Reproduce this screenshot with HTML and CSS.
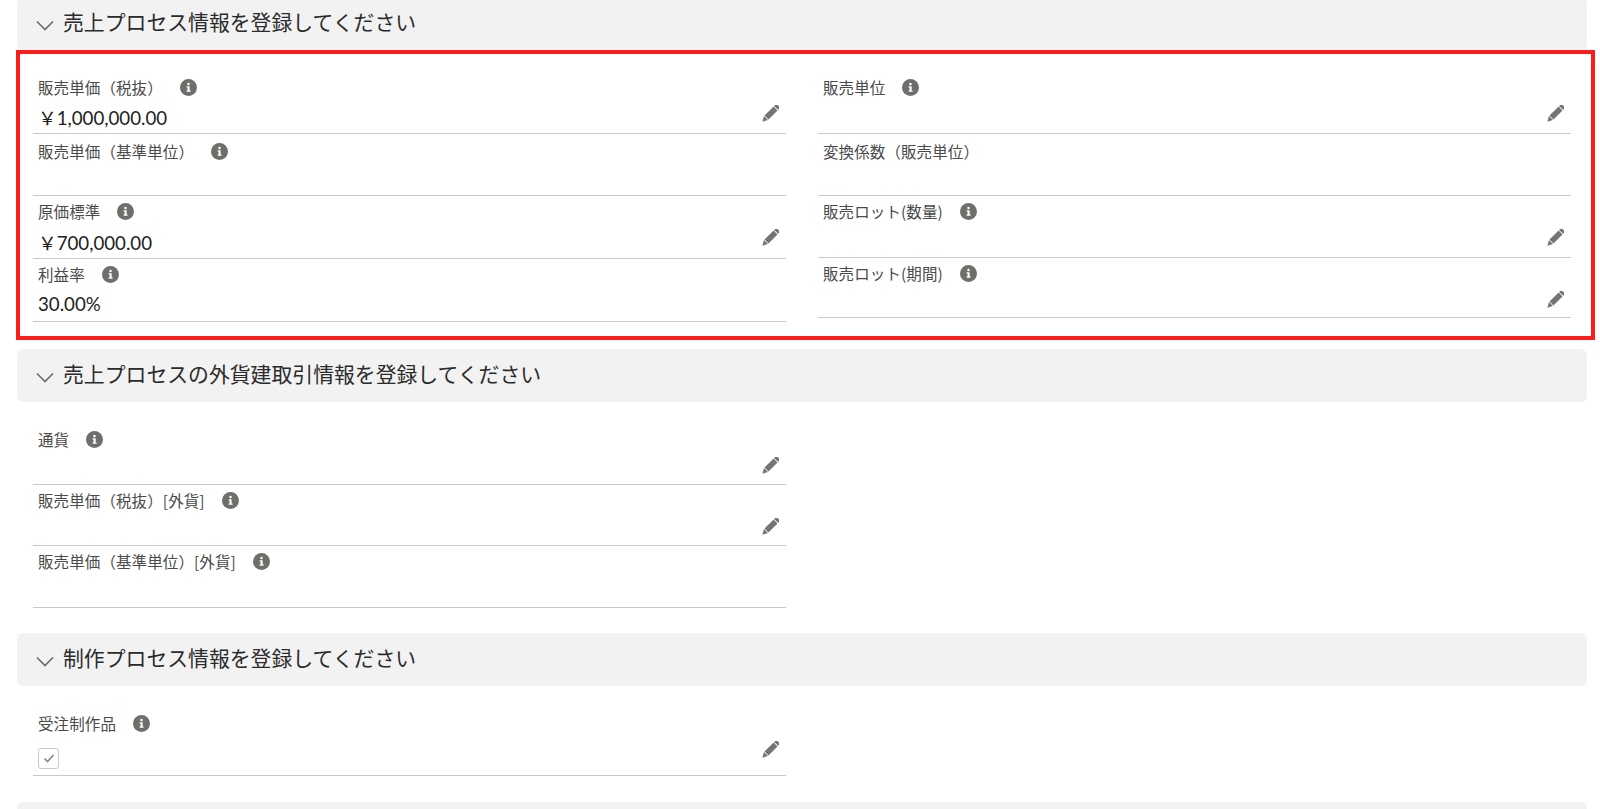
FILE: index.html
```html
<!DOCTYPE html>
<html lang="ja">
<head>
<meta charset="utf-8">
<title>売上プロセス情報</title>
<link rel="stylesheet" href="styles.css">
</head>
<body>
<svg class="defs" width="0" height="0" aria-hidden="true">
  <symbol id="info" viewBox="0 0 18 18">
    <circle cx="9" cy="9" r="9" fill="#706e6b"/>
    <circle cx="9" cy="5.3" r="1.3" fill="#fff"/>
    <path d="M7 7.7h3.2v4.6h1v1.3H7v-1.3h1V9H7z" fill="#fff"/>
  </symbol>
  <symbol id="pencil" viewBox="0 0 20 20">
    <g transform="rotate(45 10 10)" fill="#757472">
      <path d="M6.9 -2.2a.8.8 0 0 1 .8-.8h4.6a.8.8 0 0 1 .8.8V0.4H6.9z"/>
      <rect x="6.9" y="1.3" width="6.2" height="14.2"/>
      <path d="M6.9 16.4h6.2L10 22z"/>
    </g>
  </symbol>
  <symbol id="chev" viewBox="0 0 18 18">
    <path d="M1 5.5L9 13.5l8-8" fill="none" stroke="#706e6b" stroke-width="1.7"/>
  </symbol>
</svg>

<main class="page">
  <section class="section">
    <h2 class="head head-first"><svg class="chev"><use href="#chev"/></svg>売上プロセス情報を登録してください</h2>
    <div class="grid grid-first">
      <div class="col">
        <div class="field"><div class="label">販売単価（税抜）<svg class="info"><use href="#info"/></svg></div><div class="value">￥1,000,000.00</div><svg class="pencil"><use href="#pencil"/></svg></div>
        <div class="field field-low"><div class="label">販売単価（基準単位）<svg class="info"><use href="#info"/></svg></div><div class="value"></div></div>
        <div class="field h63"><div class="label">原価標準<svg class="info"><use href="#info"/></svg></div><div class="value">￥700,000.00</div><svg class="pencil"><use href="#pencil"/></svg></div>
        <div class="field h63"><div class="label">利益率<svg class="info"><use href="#info"/></svg></div><div class="value">30.00%</div></div>
      </div>
      <div class="col">
        <div class="field"><div class="label">販売単位<svg class="info"><use href="#info"/></svg></div><div class="value"></div><svg class="pencil"><use href="#pencil"/></svg></div>
        <div class="field field-low"><div class="label">変換係数（販売単位）</div><div class="value"></div></div>
        <div class="field"><div class="label">販売ロット(数量)<svg class="info"><use href="#info"/></svg></div><div class="value"></div><svg class="pencil"><use href="#pencil"/></svg></div>
        <div class="field h60"><div class="label">販売ロット(期間)<svg class="info"><use href="#info"/></svg></div><div class="value"></div><svg class="pencil"><use href="#pencil"/></svg></div>
      </div>
    </div>
  </section>

  <section class="section">
    <h2 class="head"><svg class="chev"><use href="#chev"/></svg>売上プロセスの外貨建取引情報を登録してください</h2>
    <div class="grid grid-second">
      <div class="col">
        <div class="field h61"><div class="label">通貨<svg class="info"><use href="#info"/></svg></div><div class="value"></div><svg class="pencil"><use href="#pencil"/></svg></div>
        <div class="field h61"><div class="label">販売単価（税抜）[外貨]<svg class="info"><use href="#info"/></svg></div><div class="value"></div><svg class="pencil"><use href="#pencil"/></svg></div>
        <div class="field"><div class="label">販売単価（基準単位）[外貨]<svg class="info"><use href="#info"/></svg></div><div class="value"></div></div>
      </div>
      <div class="col"></div>
    </div>
  </section>

  <section class="section">
    <h2 class="head"><svg class="chev"><use href="#chev"/></svg>制作プロセス情報を登録してください</h2>
    <div class="grid grid-third">
      <div class="col">
        <div class="field h68"><div class="label">受注制作品<svg class="info"><use href="#info"/></svg></div><div class="value"><span class="check"><svg viewBox="0 0 12 12"><path d="M1.5 6.5l3 3L10.5 3" fill="none" stroke="#8a8886" stroke-width="1.6"/></svg></span></div><svg class="pencil"><use href="#pencil"/></svg></div>
      </div>
      <div class="col"></div>
    </div>
  </section>

  <div class="head"></div>
</main>
<div class="highlight"></div>
</body>
</html>
```
FILE: styles.css
```css
html, body {
  margin: 0;
  height: 100%;
  overflow: hidden;
  background: #fff;
}
body {
  position: relative;
  color: #181818;
  font-family: "Lato", "Noto Sans CJK JP", sans-serif;
}
.defs { position: absolute; }
.page {
  padding: 0 13px 0 17px;
}
.head {
  display: flex;
  align-items: center;
  height: 53px;
  margin: 0;
  padding: 0 0 5px 19px;
  box-sizing: border-box;
  background: #f2f2f2;
  border-radius: 6px;
  font-size: 20.85px;
  font-weight: 400;
  font-family: "Noto Sans CJK JP", sans-serif;
  color: #2b2b2b;
}
.head-first { margin-top: -3px; }
.chev {
  width: 18px;
  height: 18px;
  margin-right: 9px;
  flex: none;
  position: relative;
  top: 4px;
}
.grid {
  display: grid;
  grid-template-columns: 753px 753px;
  column-gap: 32px;
  padding: 22px 0 0 16px;
}
.grid-first { padding-bottom: 27px; }
.grid-second { padding-bottom: 25px; }
.grid-third { padding-bottom: 26px; }
.col { display: flex; flex-direction: column; }
.field {
  position: relative;
  display: flex;
  flex-direction: column;
  height: 62px;
  box-sizing: border-box;
  border-bottom: 1px solid #c9c9c9;
  padding: 5px 5px 0;
}
.field-low { padding-top: 7px; }
.h60 { height: 60px; }
.h61 { height: 61px; }
.h63 { height: 63px; }
.h68 { height: 68px; }
.label {
  display: flex;
  align-items: center;
  height: 20px;
  font-family: "Noto Sans CJK JP", sans-serif;
  font-size: 15.5px;
  letter-spacing: .1px;
  color: #4a4a4a;
}
.value {
  display: flex;
  align-items: center;
  margin-top: auto;
  margin-bottom: 4px;
  height: 26px;
  font-size: 18.7px;
  color: #222;
  font-family: "Lato", "Noto Sans CJK JP", sans-serif;
}
.info {
  width: 17px;
  height: 17px;
  margin-left: 17px;
  margin-top: 1px;
  flex: none;
}
.pencil {
  position: absolute;
  right: 7px;
  top: 33px;
  width: 18px;
  height: 18px;
}
.check {
  display: inline-flex;
  align-items: center;
  justify-content: center;
  width: 21px;
  height: 21px;
  box-sizing: border-box;
  border: 1px solid #c9c9c9;
  border-radius: 3px;
  background: #fff;
}
.check svg { width: 12px; height: 12px; }
.highlight {
  position: absolute;
  left: 16px;
  top: 50px;
  width: 1579px;
  height: 290px;
  box-sizing: border-box;
  border: 4px solid #fb1c1c;
  pointer-events: none;
}
```
